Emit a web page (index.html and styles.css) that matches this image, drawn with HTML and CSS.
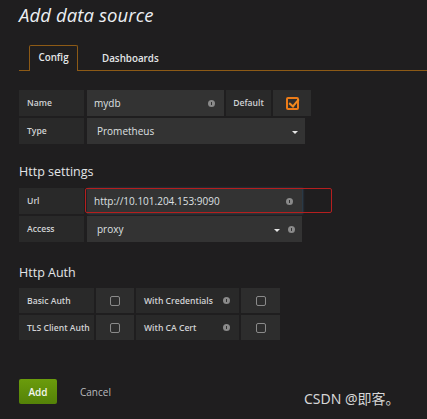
FILE: index.html
```html
<!DOCTYPE html>
<html>
<head>
<meta charset="utf-8">
<link rel="stylesheet" href="styles.css">
</head>
<body>
<div class="page">
  <h1 class="title">Add data source</h1>
  <div class="tabs">
    <div class="tab active">Config</div>
    <div class="tab">Dashboards</div>
  </div>

  <div class="form">
    <div class="row">
      <div class="label w65">Name</div>
      <div class="input w137"><span>mydb</span><span class="info"></span></div>
      <div class="label w45 center">Default</div>
      <div class="cell w38"><span class="cb checked"></span></div>
    </div>
    <div class="row">
      <div class="label w65">Type</div>
      <div class="input w218 pl10"><span>Prometheus</span><span class="caret"></span></div>
    </div>
  </div>

  <h2 class="section">Http settings</h2>
  <div class="form">
    <div class="row rel">
      <div class="label w65">Url</div>
      <div class="input w215 focus"><span>http://10.101.204.153:9090</span><span class="info"></span></div>
      <span class="annot"></span>
    </div>
    <div class="row">
      <div class="label w65">Access</div>
      <div class="input w215 pl10"><span>proxy</span><span class="tail"><span class="caret"></span><span class="info"></span></span></div>
    </div>
  </div>

  <h2 class="section auth">Http Auth</h2>
  <div class="form">
    <div class="row short">
      <div class="label w75">Basic Auth</div>
      <div class="cell w38"><span class="cb"></span></div>
      <div class="label w103 spread"><span>With Credentials</span><span class="info"></span></div>
      <div class="cell w39"><span class="cb"></span></div>
    </div>
    <div class="row short">
      <div class="label w75">TLS Client Auth</div>
      <div class="cell w38"><span class="cb"></span></div>
      <div class="label w103 spread"><span>With CA Cert</span><span class="info"></span></div>
      <div class="cell w39"><span class="cb"></span></div>
    </div>
  </div>

  <div class="actions">
    <button class="btn-add">Add</button>
    <span class="cancel">Cancel</span>
  </div>
</div>
<div class="watermark">CSDN @即客。</div>
</body>
</html>
```
FILE: styles.css
```css
html, body {
  margin: 0;
  padding: 0;
  background: #1f1e1f;
  width: 427px;
  height: 419px;
  overflow: hidden;
  font-family: "Open Sans", "Noto Sans", sans-serif;
  color: #d8d9da;
}
.page {
  padding: 0 0 0 19px;
}
.title {
  margin: 0;
  padding-top: 3px;
  font-size: 18.5px;
  line-height: 24px;
  font-style: italic;
  font-weight: 400;
  color: #eceff3;
  letter-spacing: 0.1px;
}
.tabs {
  margin-top: 18px;
  display: flex;
  align-items: flex-end;
  border-bottom: 1px solid #8c5a16;
  padding-left: 10px;
  height: 25px;
}
.tab {
  font-size: 9.8px;
  font-weight: 600;
  color: #e4e6e8;
  height: 25px;
  line-height: 25px;
  box-sizing: border-box;
  margin-bottom: -1px;
}
.tab.active {
  width: 49px;
  text-align: center;
  border: 1px solid #8c5a16;
  border-bottom: none;
  background: #1f1e1f;
  height: 26px;
  border-radius: 2px 2px 0 0;
  line-height: 24px;
}
.tab + .tab {
  margin-left: 24px;
}
.form {
  display: flex;
  flex-direction: column;
  gap: 2px;
}
.tabs + .form {
  margin-top: 19px;
}
.row {
  display: flex;
  gap: 2px;
  height: 26px;
}
.row.short {
  height: 25px;
  gap: 2px;
}
.rel { position: relative; }
.label, .input, .cell {
  box-sizing: border-box;
  height: 100%;
  display: flex;
  align-items: center;
}
.label {
  background: #292929;
  font-size: 8.6px;
  font-weight: 600;
  color: #d0d2d4;
  padding-left: 8px;
  white-space: nowrap;
}
.label.center { justify-content: center; padding-left: 0; }
.label.spread { justify-content: space-between; padding-right: 9px; }
.input {
  background: #333333;
  font-size: 10px;
  color: #dfe0e2;
  padding: 0 9px 0 7px;
  justify-content: space-between;
}
.input.pl10 { padding-left: 10px; padding-right: 7px; }
.input.focus { box-shadow: 1px 0 2px rgba(80, 150, 200, 0.35); }
.cell {
  background: #2d2d2d;
  justify-content: center;
}
.w38 { width: 38px; }
.w39 { width: 39px; }
.w45 { width: 45px; }
.w65 { width: 65px; margin-right: 1px; }
.w75 { width: 75px; }
.w103 { width: 103px; }
.w137 { width: 137px; }
.w215 { width: 215px; }
.w218 { width: 218px; }
.tail { display: flex; align-items: center; gap: 8px; }
.info {
  width: 7px;
  height: 7px;
  border-radius: 50%;
  background: #8a8a8a;
  position: relative;
  display: inline-block;
}
.info::after {
  content: "";
  position: absolute;
  left: 3px;
  top: 2px;
  width: 1px;
  height: 3px;
  background: #333;
}
.caret {
  width: 0;
  height: 0;
  border-left: 3px solid transparent;
  border-right: 3px solid transparent;
  border-top: 3px solid #e6e6e6;
  display: inline-block;
  margin-top: 2px;
}
.cb {
  width: 10px;
  height: 10px;
  box-sizing: border-box;
  border: 1.5px solid #8a8a8a;
  border-radius: 2px;
  display: inline-block;
  position: relative;
}
.cb.checked {
  width: 13px;
  height: 13px;
  border: 2px solid #eb7b18;
  border-radius: 2px;
}
.cb.checked::after {
  content: "";
  position: absolute;
  left: 3.5px;
  top: -2px;
  width: 4px;
  height: 8px;
  border-right: 2.5px solid #f18a1f;
  border-bottom: 2.5px solid #f18a1f;
  transform: rotate(40deg);
}
.annot {
  position: absolute;
  left: 66px;
  top: 0;
  width: 247px;
  height: 25px;
  box-sizing: border-box;
  border: 1.5px solid #b51f1f;
  border-radius: 2px;
  pointer-events: none;
}
.section {
  margin: 19px 0 8px;
  font-size: 12.5px;
  line-height: 17px;
  font-weight: 400;
  color: #e4e6e8;
}
.section.auth {
  margin-top: 22px;
  margin-bottom: 7px;
}
.actions {
  margin-top: 39px;
  display: flex;
  align-items: center;
  gap: 23px;
}
.btn-add {
  width: 38px;
  height: 25px;
  border: none;
  border-radius: 2px;
  background: linear-gradient(#6b9c0c, #548208);
  color: #f3f6ee;
  font-family: "Open Sans", sans-serif;
  font-size: 10px;
  font-weight: 600;
  padding: 0;
}
.cancel {
  font-size: 10px;
  color: #b9bbbd;
}
.watermark {
  position: absolute;
  left: 304px;
  top: 390px;
  font-family: "Noto Sans", "Noto Sans CJK SC", sans-serif;
  font-size: 14px;
  color: #d6d6d6;
  letter-spacing: 0;
  line-height: 18px;
}
```
